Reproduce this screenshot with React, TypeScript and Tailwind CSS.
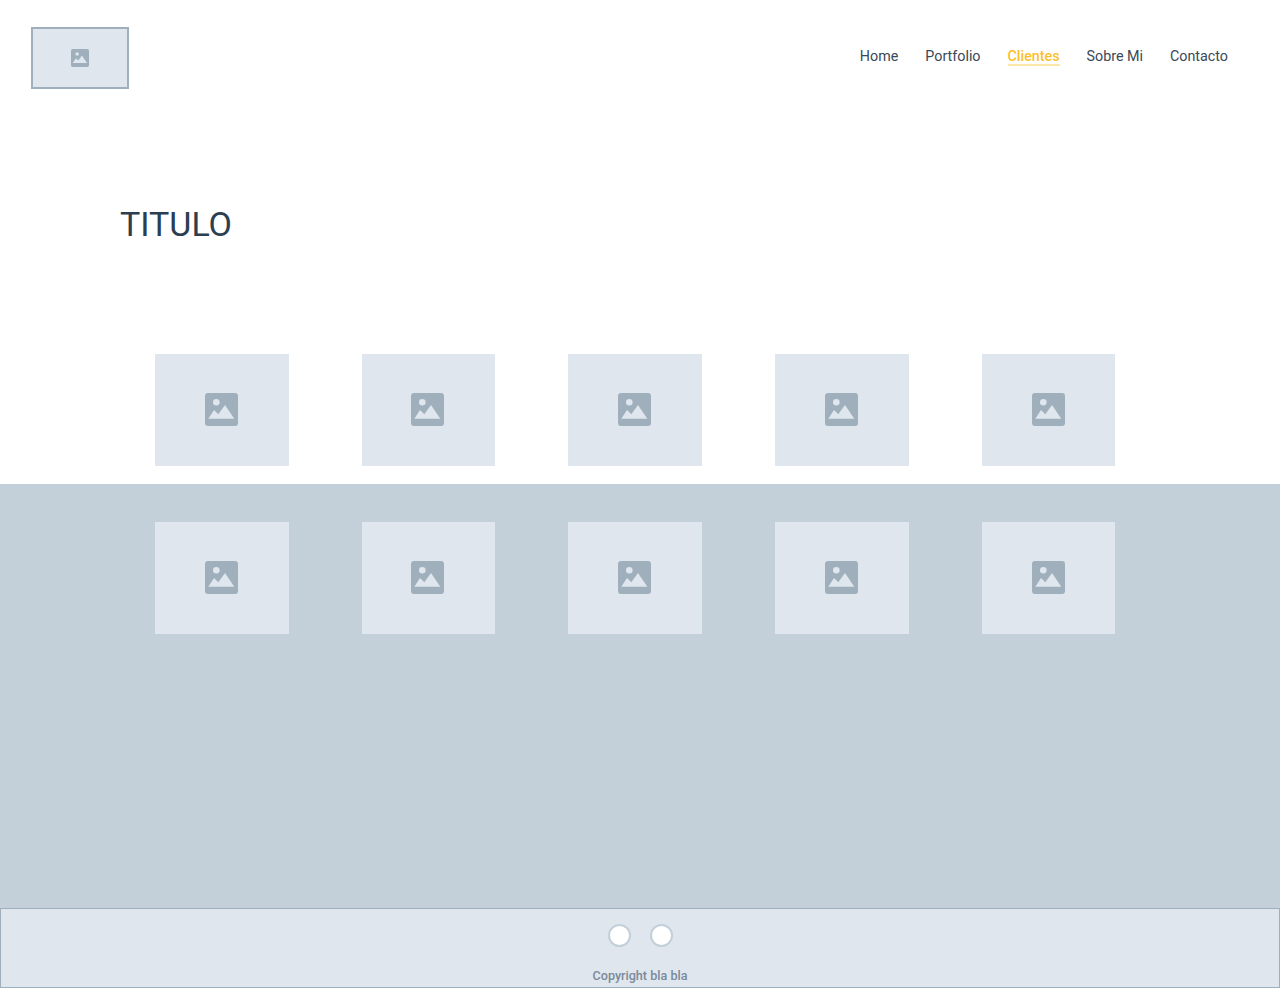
const ImageIcon = ({ className }: { className: string }) => (
  <svg viewBox="0 0 33 33" className={className} aria-hidden="true">
    <rect width="33" height="33" rx="3" fill="#9fafbc" />
    <circle cx="11.3" cy="9.3" r="3.3" fill="#dfe6ee" />
    <path d="M3.3 25.7 9 17l4.3 4.3L20 12l9.3 13.7z" fill="#dfe6ee" />
  </svg>
);

const Placeholder = () => (
  <div className="flex h-[112px] items-center justify-center bg-[#dfe6ee] pb-[2px] pr-[1.2px]">
    <ImageIcon className="h-[33px] w-[33px]" />
  </div>
);

const links = ["Home", "Portfolio", "Clientes", "Sobre Mi", "Contacto"];

const Row = () => (
  <div className="grid grid-cols-[repeat(5,133.7px)] gap-x-[73px] pl-[155px]">
    {[1, 2, 3, 4, 5].map((n) => (
      <Placeholder key={n} />
    ))}
  </div>
);

const App = () => {
  return (
    <div className="flex min-h-[988px] flex-col bg-white font-['Roboto',sans-serif] text-[#2c3e4f]">
      <header className="flex items-start justify-between pl-[31px] pr-[52px] pt-[27px]">
        <div className="flex h-[62px] w-[98px] items-center justify-center border-2 border-[#9fafbc] bg-[#dfe6ee]">
          <ImageIcon className="h-[18px] w-[18px]" />
        </div>
        <nav className="mt-[22px] flex gap-[27px] text-[14.3px] leading-[15px]">
          {links.map((link) =>
            link === "Clientes" ? (
              <a key={link} className="border-b-2 border-[#fde7a6] font-medium text-[#fbbf2d]">
                {link}
              </a>
            ) : (
              <a key={link} className="text-[#3a4857]">
                {link}
              </a>
            )
          )}
        </nav>
      </header>

      <h1 className="mt-[113px] pl-[120px] text-[34px] leading-[44px] text-[#2c3e4f]">TITULO</h1>

      <div className="mt-[108px] pb-[18px]">
        <Row />
      </div>

      <main className="flex-1 bg-[#c3cfd9] pt-[38px]">
        <Row />
      </main>

      <footer className="flex h-[80px] flex-col items-center border border-[#9fafbc] bg-[#dfe6ee]">
        <div className="ml-[1px] mt-[15px] flex gap-[19px]">
          <span className="h-[23px] w-[23px] rounded-full border-2 border-[#c3cfd9] bg-white" />
          <span className="h-[23px] w-[23px] rounded-full border-2 border-[#c3cfd9] bg-white" />
        </div>
        <p className="mt-[21px] text-[12.6px] font-medium leading-[16px] text-[#7b8a9a]">Copyright bla bla</p>
      </footer>
    </div>
  );
};

export default App;
